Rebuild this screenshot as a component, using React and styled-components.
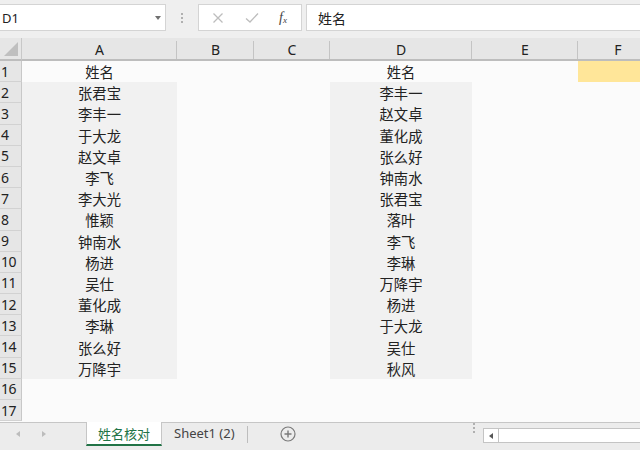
import React from "react";
import styled, { createGlobalStyle } from "styled-components";

const GlobalStyle = createGlobalStyle`
    html, body {
        margin: 0;
        padding: 0;
        background: #fbfbfb;
        font-family: "Noto Sans", "Noto Sans CJK SC", sans-serif;
        overflow: hidden;
    }
`;

const FONT = `"Noto Sans", "Noto Sans CJK SC", sans-serif`;

const columns = [
    { key: "A", width: 155 },
    { key: "B", width: 77 },
    { key: "C", width: 76 },
    { key: "D", width: 142 },
    { key: "E", width: 106 },
    { key: "F", width: 80 },
];

const colA = ["姓名", "张君宝", "李丰一", "于大龙", "赵文卓", "李飞", "李大光", "惟颖", "钟南水", "杨进", "吴仕", "董化成", "李琳", "张么好", "万降宇"];
const colD = ["姓名", "李丰一", "赵文卓", "董化成", "张么好", "钟南水", "张君宝", "落叶", "李飞", "李琳", "万降宇", "杨进", "于大龙", "吴仕", "秋风"];

const ROWS = 17;

const App = () => {
    const rows = [];
    for (let r = 1; r <= ROWS; r++) {
        rows.push(r);
    }

    const cellFor = (col, r) => {
        const i = r - 1;
        if (col === "A" && i < colA.length) return { text: colA[i], fill: r > 1 ? "grey" : null };
        if (col === "D" && i < colD.length) return { text: colD[i], fill: r > 1 ? "grey" : null };
        if (col === "F" && r === 1) return { text: "", fill: "yellow" };
        return { text: "", fill: null };
    };

    return (
        <Page>
            <GlobalStyle />
            <FormulaBar>
                <NameBox>
                    <span>D1</span>
                    <DropArrow />
                </NameBox>
                <Grip>
                    <i />
                    <i />
                    <i />
                </Grip>
                <FxBox>
                    <FxIcon $muted>
                        <svg width="12" height="12" viewBox="0 0 12 12">
                            <path d="M1.5 1.5 L10.5 10.5 M10.5 1.5 L1.5 10.5" stroke="#bdbdbd" strokeWidth="1.3" fill="none" />
                        </svg>
                    </FxIcon>
                    <FxIcon $muted>
                        <svg width="14" height="12" viewBox="0 0 14 12">
                            <path d="M1 6.5 L5 10 L13 1.5" stroke="#bdbdbd" strokeWidth="1.3" fill="none" />
                        </svg>
                    </FxIcon>
                    <FxLabel>
                        f<sub>x</sub>
                    </FxLabel>
                </FxBox>
                <FormulaInput>姓名</FormulaInput>
            </FormulaBar>

            <Sheet>
                <Grid>
                    <Corner>
                        <svg width="14" height="14" viewBox="0 0 14 14">
                            <polygon points="14,0 14,14 0,14" fill="#bfbfbf" />
                        </svg>
                    </Corner>
                    {columns.map((c) => (
                        <ColHeader key={c.key} style={{ width: c.width }}>
                            {c.key}
                        </ColHeader>
                    ))}
                    {rows.map((r) => (
                        <React.Fragment key={r}>
                            <RowHeader>{r}</RowHeader>
                            {columns.map((c) => {
                                const cell = cellFor(c.key, r);
                                return (
                                    <Cell key={c.key} $fill={cell.fill}>
                                        {cell.text}
                                    </Cell>
                                );
                            })}
                        </React.Fragment>
                    ))}
                </Grid>
            </Sheet>

            <TabBar>
                <NavArrows>
                    <Tri $dir="left" />
                    <Tri $dir="right" />
                </NavArrows>
                <SheetTab $active>姓名核对</SheetTab>
                <SheetTab>Sheet1 (2)</SheetTab>
                <TabDivider />
                <AddSheet>
                    <svg width="16" height="16" viewBox="0 0 16 16">
                        <circle cx="8" cy="8" r="7" stroke="#7a7a7a" strokeWidth="1.2" fill="none" />
                        <path d="M8 4.5 V11.5 M4.5 8 H11.5" stroke="#7a7a7a" strokeWidth="1.4" />
                    </svg>
                </AddSheet>
                <Spacer />
                <Grip $bar>
                    <i />
                    <i />
                    <i />
                </Grip>
                <HScroll>
                    <ScrollBtn>
                        <Tri $dir="left" $dark />
                    </ScrollBtn>
                </HScroll>
            </TabBar>
        </Page>
    );
};

const Page = styled.div`
    width: 640px;
    height: 450px;
    display: flex;
    flex-direction: column;
    overflow: hidden;
`;

const FormulaBar = styled.div`
    height: 38px;
    box-sizing: border-box;
    padding-top: 4px;
    padding-bottom: 7px;
    background: #efefef;
    display: flex;
    align-items: stretch;
`;

const NameBox = styled.div`
    width: 166px;
    box-sizing: border-box;
    background: #fff;
    border: 1px solid #d4d4d4;
    border-left: none;
    display: flex;
    align-items: center;
    justify-content: space-between;
    padding: 0 4px 0 2px;
    font-family: ${FONT};
    font-size: 13px;
    color: #222;
`;

const DropArrow = styled.span`
    width: 0;
    height: 0;
    border-left: 3.5px solid transparent;
    border-right: 3.5px solid transparent;
    border-top: 4px solid #707070;
`;

const Grip = styled.div`
    width: ${(p) => (p.$bar ? "14px" : "32px")};
    display: flex;
    flex-direction: column;
    align-items: center;
    justify-content: center;
    gap: 2px;

    i {
        display: block;
        width: 2px;
        height: 2px;
        background: #b0b0b0;
    }
`;

const FxBox = styled.div`
    width: 104px;
    box-sizing: border-box;
    background: #fff;
    border: 1px solid #d4d4d4;
    display: flex;
    align-items: center;
    padding-left: 10px;
    gap: 16px;
    height: 27px;
`;

const FxIcon = styled.span`
    display: flex;
    align-items: center;
    justify-content: center;
    width: 18px;
`;

const FxLabel = styled.span`
    font-family: "Liberation Serif", serif;
    font-style: italic;
    font-size: 14px;
    color: #444;
    margin-left: 2px;

    sub {
        font-size: 9px;
        vertical-align: -1px;
    }
`;

const FormulaInput = styled.div`
    flex: 1;
    margin-left: 4px;
    box-sizing: border-box;
    background: #fff;
    border: 1px solid #d4d4d4;
    border-right: none;
    display: flex;
    align-items: center;
    padding-left: 11px;
    font-family: ${FONT};
    font-size: 14px;
    color: #222;
    height: 27px;
`;

const Sheet = styled.div`
    flex: 1;
    overflow: hidden;
    background: #fbfbfb;
`;

const Grid = styled.div`
    display: grid;
    grid-template-columns: 22px ${columns.map((c) => `${c.width}px`).join(" ")};
    grid-template-rows: 23px repeat(${ROWS}, 21.2px);
`;

const Corner = styled.div`
    background: #e6e6e6;
    border-right: 1px solid #c8c8c8;
    border-bottom: 2px solid #bdbdbd;
    box-sizing: border-box;
    display: flex;
    align-items: flex-end;
    justify-content: flex-end;
    padding: 0 3px 3px 0;
`;

const ColHeader = styled.div`
    background: #e6e6e6;
    border-bottom: 2px solid #bdbdbd;
    box-sizing: border-box;
    position: relative;
    display: flex;
    align-items: center;
    justify-content: center;
    font-family: ${FONT};
    font-size: 14px;
    color: #222;
    padding-top: 2px;

    &::after {
        content: "";
        position: absolute;
        right: 0;
        top: 3px;
        bottom: 0;
        width: 1px;
        background: #c4c4c4;
    }
`;

const RowHeader = styled.div`
    background: #e6e6e6;
    border-right: 1px solid #c8c8c8;
    border-bottom: 1px solid #d2d2d2;
    box-sizing: border-box;
    display: flex;
    align-items: center;
    padding-left: 1px;
    font-family: ${FONT};
    font-size: 14px;
    color: #222;
    letter-spacing: -0.5px;
`;

const Cell = styled.div`
    background: ${(p) => (p.$fill === "grey" ? "#f1f1f1" : p.$fill === "yellow" ? "#ffe699" : "transparent")};
    display: flex;
    align-items: center;
    justify-content: center;
    font-family: ${FONT};
    font-size: 14.3px;
    color: #222;
    white-space: nowrap;
`;

const TabBar = styled.div`
    height: 28px;
    box-sizing: border-box;
    border-top: 1px solid #c6c6c6;
    background: #ececec;
    display: flex;
    align-items: flex-start;
    padding-bottom: 5px;
`;

const NavArrows = styled.div`
    width: 86px;
    height: 22px;
    display: flex;
    align-items: center;
    gap: 22px;
    padding-left: 16px;
    box-sizing: border-box;
`;

const Tri = styled.span`
    width: 0;
    height: 0;
    border-top: 3.5px solid transparent;
    border-bottom: 3.5px solid transparent;
    ${(p) =>
        p.$dir === "left"
            ? `border-right: 4px solid ${p.$dark ? "#555" : "#bcbcbc"};`
            : `border-left: 4px solid ${p.$dark ? "#555" : "#bcbcbc"};`}
`;

const SheetTab = styled.div`
    height: 22px;
    box-sizing: content-box;
    padding: 0 ${(p) => (p.$active ? "11px" : "12px")};
    display: flex;
    align-items: center;
    font-family: ${FONT};
    font-size: 13px;
    background: ${(p) => (p.$active ? "#fff" : "transparent")};
    color: ${(p) => (p.$active ? "#217346" : "#444")};
    border-left: ${(p) => (p.$active ? "1px solid #c6c6c6" : "none")};
    border-right: ${(p) => (p.$active ? "1px solid #c6c6c6" : "none")};
    border-bottom: 2px solid ${(p) => (p.$active ? "#217346" : "transparent")};
    margin-top: -1px;
`;

const TabDivider = styled.div`
    width: 1px;
    height: 17px;
    margin-top: 3px;
    background: #bdbdbd;
`;

const AddSheet = styled.div`
    width: 80px;
    height: 22px;
    display: flex;
    align-items: center;
    justify-content: center;
`;

const Spacer = styled.div`
    flex: 1;
    height: 22px;
`;

const HScroll = styled.div`
    width: 157px;
    height: 15px;
    margin-top: 5px;
    margin-left: 2px;
    box-sizing: border-box;
    background: #fff;
    border: 1px solid #c4c4c4;
    border-right: none;
    display: flex;
`;

const ScrollBtn = styled.div`
    width: 14px;
    border-right: 1px solid #c4c4c4;
    display: flex;
    align-items: center;
    justify-content: center;
`;

export default App;
